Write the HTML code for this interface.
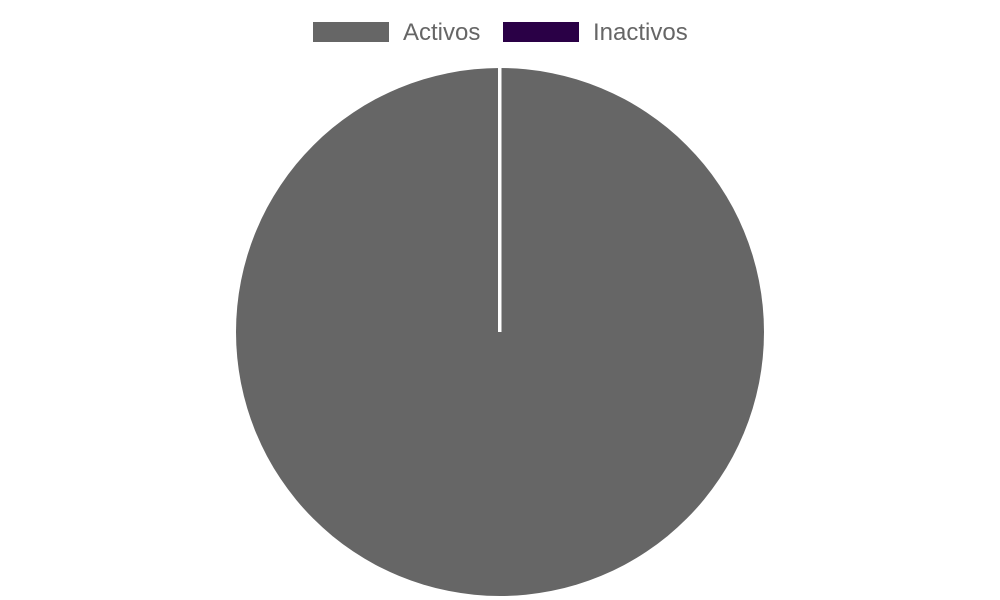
<!DOCTYPE html>
<html><head><style>
html,body{margin:0;padding:0;background:#fff;width:1000px;height:600px;overflow:hidden}
</style></head><body>
<svg width="1000" height="600" xmlns="http://www.w3.org/2000/svg">
<rect x="313" y="22" width="76" height="20" fill="#666"/>
<text x="403" y="40" font-family="Liberation Sans, sans-serif" font-size="24" fill="#666">Activos</text>
<rect x="503" y="22" width="76" height="20" fill="#2a0046"/>
<text x="593" y="40" font-family="Liberation Sans, sans-serif" font-size="24" fill="#666">Inactivos</text>
<circle cx="500" cy="332" r="264" fill="#666"/>
<rect x="498" y="66" width="3.5" height="266" fill="#fff"/>
</svg>
</body></html>
